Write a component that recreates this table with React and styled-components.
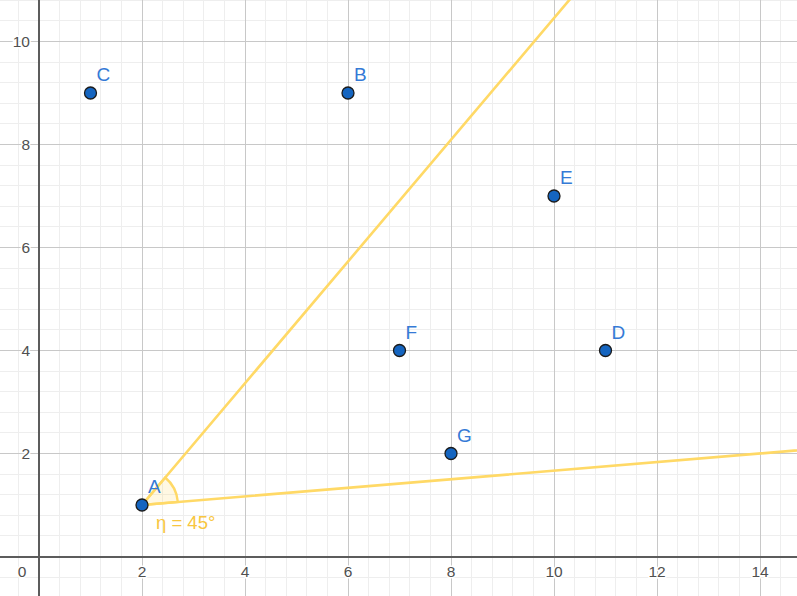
import styled, { createGlobalStyle } from "styled-components";

const GlobalStyle = createGlobalStyle`
  html, body {
    margin: 0;
    padding: 0;
    background: #ffffff;
  }
`;

// view mapping: 1 unit = 51.5px, origin at (39, 556)
const UNIT = 51.5;
const OX = 39;
const OY = 556.5;
const W = 797;
const H = 596;
const px = (x) => OX + x * UNIT;
const py = (y) => OY - y * UNIT;

const Board = styled.div`
  width: ${W}px;
  height: ${H}px;
  background: #ffffff;
  overflow: hidden;
  font-family: "Liberation Sans", Arial, sans-serif;
`;

const Graph = styled.svg`
  display: block;
`;

const GridLine = styled.line`
  stroke: ${(p) => (p.$major ? "#c8c8c8" : "#eeeeee")};
  stroke-width: 1;
  shape-rendering: crispEdges;
`;

const AxisLine = styled.line`
  stroke: #5c5c5c;
  stroke-width: 2;
  shape-rendering: crispEdges;
`;

const TickLabel = styled.text`
  font-size: 15.5px;
  fill: #505050;
  stroke: #ffffff;
  stroke-width: 3px;
  paint-order: stroke;
`;

const Ray = styled.line`
  stroke: #ffd966;
  stroke-width: 2.6;
  stroke-linecap: round;
`;

const AngleSector = styled.path`
  fill: rgba(255, 217, 102, 0.18);
  stroke: #ffd966;
  stroke-width: 2.4;
`;

const AngleText = styled.text`
  font-size: 18.5px;
  fill: #f8c640;
`;

const Dot = styled.circle`
  fill: #1565c0;
  stroke: #1b1b1b;
  stroke-width: 1.3;
`;

const PointLabel = styled.text`
  font-size: 19px;
  fill: #357ad6;
`;

const points = [
  { name: "A", x: 2, y: 1 },
  { name: "B", x: 6, y: 9 },
  { name: "C", x: 1, y: 9 },
  { name: "D", x: 11, y: 4 },
  { name: "E", x: 10, y: 7 },
  { name: "F", x: 7, y: 4 },
  { name: "G", x: 8, y: 2 },
];

const range = (from, to, step) => {
  const out = [];
  for (let v = from; v <= to + 1e-9; v += step) out.push(Math.round(v * 100) / 100);
  return out;
};

const xs = range(-0.8, 15.6, 0.4);
const ys = range(-0.8, 11.2, 0.4);
const isMajor = (v) => Math.abs(v / 2 - Math.round(v / 2)) < 1e-6;

const A = { x: px(2), y: py(1) };
const lowDir = { x: 12, y: -1 };
const highDir = { x: 11, y: -13 };

const arcPath = () => {
  const r = 36;
  const a1 = Math.atan2(1, 12);
  const a2 = a1 + Math.PI / 4;
  const p1 = { x: A.x + r * Math.cos(a1), y: A.y - r * Math.sin(a1) };
  const p2 = { x: A.x + r * Math.cos(a2), y: A.y - r * Math.sin(a2) };
  return `M ${A.x} ${A.y} L ${p1.x} ${p1.y} A ${r} ${r} 0 0 0 ${p2.x} ${p2.y} Z`;
};

const App = () => {
  return (
    <Board>
      <GlobalStyle />
      <Graph width={W} height={H} viewBox={`0 0 ${W} ${H}`}>
        {xs.filter((v) => !isMajor(v)).map((v) => (
          <GridLine key={`vx${v}`} x1={px(v)} x2={px(v)} y1={0} y2={H} />
        ))}
        {ys.filter((v) => !isMajor(v)).map((v) => (
          <GridLine key={`hy${v}`} x1={0} x2={W} y1={py(v)} y2={py(v)} />
        ))}
        {xs.filter((v) => isMajor(v) && v !== 0).map((v) => (
          <GridLine $major key={`VX${v}`} x1={px(v)} x2={px(v)} y1={0} y2={H} />
        ))}
        {ys.filter((v) => isMajor(v) && v !== 0).map((v) => (
          <GridLine $major key={`HY${v}`} x1={0} x2={W} y1={py(v)} y2={py(v)} />
        ))}

        <AxisLine x1={px(0)} x2={px(0)} y1={0} y2={H} />
        <AxisLine x1={0} x2={W} y1={py(0)} y2={py(0)} />

        {[2, 4, 6, 8, 10, 12, 14].map((v) => (
          <TickLabel key={`tx${v}`} x={px(v)} y={py(0) + 20} textAnchor="middle">
            {v}
          </TickLabel>
        ))}
        <TickLabel x={22} y={py(0) + 20} textAnchor="middle">0</TickLabel>
        {[2, 4, 6, 8, 10].map((v) => (
          <TickLabel key={`ty${v}`} x={30} y={py(v) + 5.5} textAnchor="end">
            {v}
          </TickLabel>
        ))}

        <AngleSector d={arcPath()} />
        <Ray x1={A.x} y1={A.y} x2={A.x + lowDir.x * 80} y2={A.y + lowDir.y * 80} />
        <Ray x1={A.x} y1={A.y} x2={A.x + highDir.x * 60} y2={A.y + highDir.y * 60} />
        <AngleText x={156} y={529}>η = 45°</AngleText>

        {points.map((p) => (
          <g key={p.name}>
            <Dot cx={px(p.x)} cy={py(p.y)} r={6} />
            <PointLabel x={px(p.x) + 6} y={py(p.y) - 12}>
              {p.name}
            </PointLabel>
          </g>
        ))}
      </Graph>
    </Board>
  );
};

export default App;
